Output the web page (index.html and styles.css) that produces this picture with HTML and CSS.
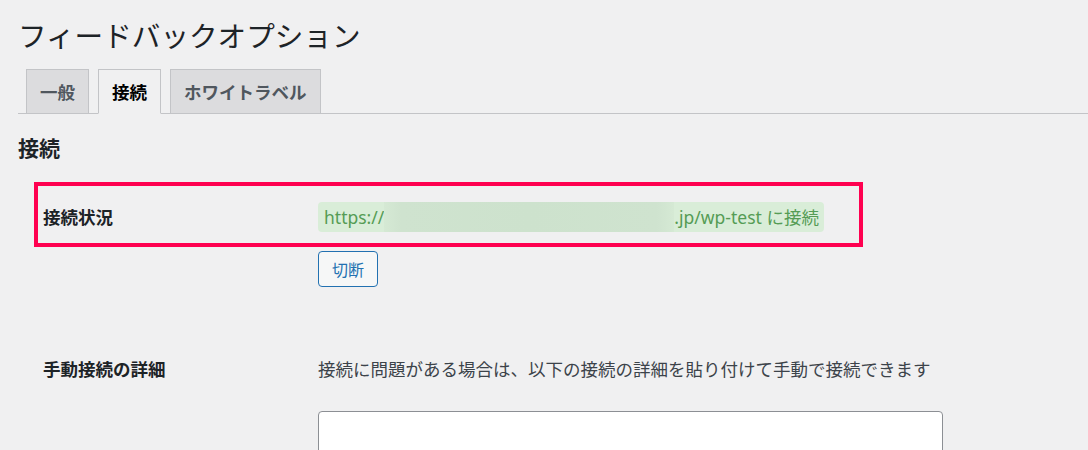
FILE: index.html
```html
<!DOCTYPE html>
<html lang="ja">
<head>
<meta charset="utf-8">
<title>フィードバックオプション</title>
<link rel="stylesheet" href="styles.css">
</head>
<body>
<div class="wrap">
  <h1 class="title">フィードバックオプション</h1>
  <nav class="tabs">
    <a class="tab">一般</a>
    <a class="tab active">接続</a>
    <a class="tab">ホワイトラベル</a>
  </nav>
  <h2 class="section-title">接続</h2>
  <div class="form">
    <div class="row boxed">
      <div class="label">接続状況</div>
      <div class="value">
        <span class="status">https://<span class="redacted"></span>.jp/wp-test に接続</span>
      </div>
    </div>
    <div class="row plain btn-row">
      <div class="label"></div>
      <div class="value"><button class="button">切断</button></div>
    </div>
    <div class="row plain manual">
      <div class="label">手動接続の詳細</div>
      <div class="value">
        <p class="desc">接続に問題がある場合は、以下の接続の詳細を貼り付けて手動で接続できます</p>
        <textarea class="details"></textarea>
      </div>
    </div>
  </div>
</div>
</body>
</html>
```

FILE: styles.css
```css
html, body {
  margin: 0;
  padding: 0;
  background: #f0f0f1;
}
body {
  font-family: "Noto Sans", "Noto Sans CJK JP", sans-serif;
  color: #1d2327;
  overflow: hidden;
}
.wrap {
  padding: 16px 0 0 18px;
}
.title {
  margin: 0;
  font-size: 28.6px;
  font-weight: 400;
  line-height: 40px;
  color: #1d2327;
}
.tabs {
  margin-top: 12px;
  display: flex;
  align-items: flex-end;
  border-bottom: 1px solid #c3c4c7;
  padding-left: 8px;
  height: 45px;
}
.tab {
  box-sizing: border-box;
  height: 45px;
  margin-bottom: -1px;
  padding: 0 13px;
  border: 1px solid #c3c4c7;
  background: #dcdcde;
  color: #50575e;
  font-size: 17.5px;
  font-weight: 700;
  line-height: 43px;
  margin-right: 9px;
  font-family: "Noto Sans CJK JP", sans-serif;
}
.tab.active {
  background: #f0f0f1;
  color: #000;
  border-bottom-color: #f0f0f1;
}
.section-title {
  margin: 18px 0 0;
  font-size: 21px;
  font-weight: 700;
  line-height: 30px;
  color: #1d2327;
  font-family: "Noto Sans CJK JP", sans-serif;
}
.form {
  margin: 20px 0 0 16px;
  width: 829px;
}
.row {
  display: grid;
  grid-template-columns: 275px 1fr;
  align-items: start;
}
.row.boxed {
  border: 4px solid #ff0050;
  padding: 16px 0 11px 5px;
  align-items: center;
}
.row.plain {
  padding-left: 9px;
}
.label {
  font-size: 17.5px;
  font-weight: 700;
  line-height: 30px;
  color: #1d2327;
  font-family: "Noto Sans CJK JP", sans-serif;
}
.status {
  display: inline-flex;
  align-items: center;
  height: 30px;
  padding: 0 5px 0 6px;
  background: #d9edd8;
  border-radius: 4px;
  color: #559c55;
  font-size: 17.5px;
  line-height: 30px;
  white-space: nowrap;
}
.redacted {
  display: inline-block;
  width: 290px;
  height: 30px;
  margin-left: 0;
  background: linear-gradient(90deg, #d5e9d4 0%, #cfe3cf 6%, #cde2cd 50%, #cfe3cf 94%, #d5e9d4 100%);
}
.btn-row {
  margin-top: 4px;
}
.button {
  box-sizing: border-box;
  height: 36px;
  padding: 0 13px;
  border: 1px solid #2271b1;
  border-radius: 4px;
  background: #f6f7f7;
  color: #2271b1;
  font-family: "Noto Sans CJK JP", sans-serif;
  font-size: 16px;
  line-height: 34px;
}
.manual {
  margin-top: 67px;
}
.desc {
  margin: 0;
  font-size: 17.5px;
  line-height: 30px;
  color: #3c434a;
  font-family: "Noto Sans CJK JP", sans-serif;
  white-space: nowrap;
}
.details {
  display: block;
  box-sizing: border-box;
  margin-top: 27px;
  width: 625px;
  height: 140px;
  border: 1px solid #8c8f94;
  border-radius: 4px;
  background: #fff;
  resize: none;
}
```
